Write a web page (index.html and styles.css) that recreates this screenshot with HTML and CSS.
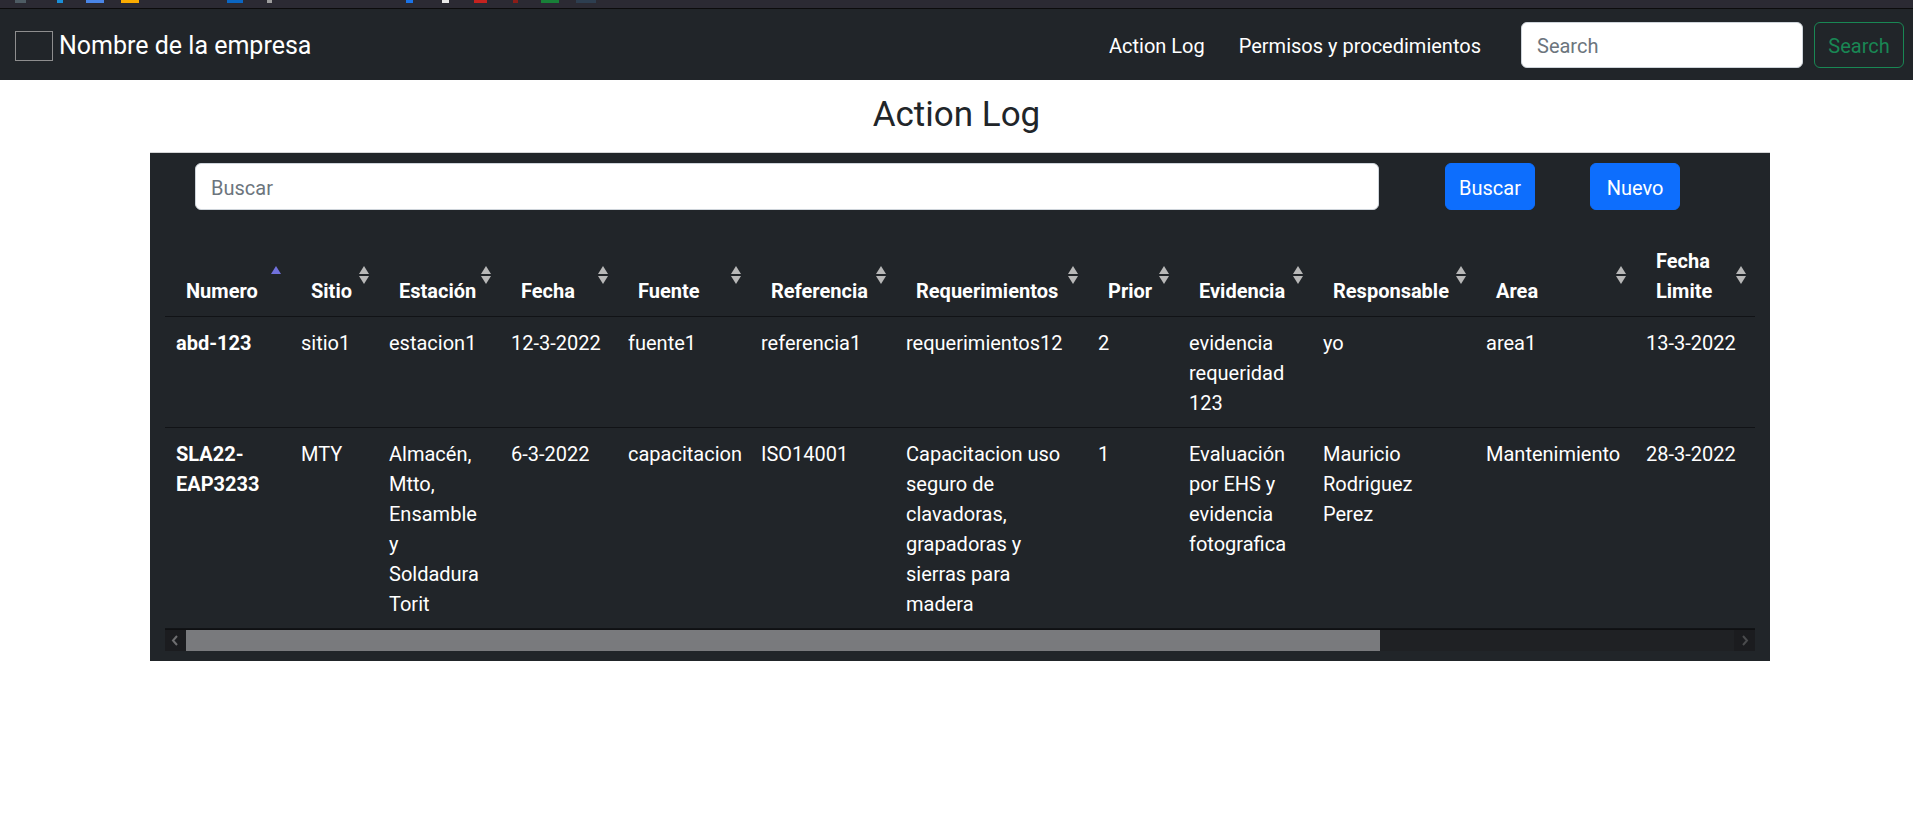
FILE: index.html
```html
<!DOCTYPE html>
<html lang="es">
<head>
<meta charset="utf-8">
<title>Action Log</title>
<link rel="stylesheet" href="styles.css">
</head>
<body>
<div class="chrome">
  <span class="bit b1"></span><span class="bit b2"></span><span class="bit b3"></span><span class="bit b4"></span>
  <span class="bit b5"></span><span class="bit b6"></span><span class="bit b7"></span><span class="bit b8"></span>
  <span class="bit b9"></span><span class="bit b10"></span><span class="bit b11"></span><span class="bit b12"></span>
</div>
<nav class="navbar">
  <a class="brand" href="#"><span class="logo"></span><span class="brand-text">Nombre de la empresa</span></a>
  <ul class="nav">
    <li><a class="nav-link" href="#">Action Log</a></li>
    <li><a class="nav-link" href="#">Permisos y procedimientos</a></li>
  </ul>
  <form class="nav-search">
    <input class="form-control nav-input" type="search" placeholder="Search">
    <button class="btn btn-outline-success" type="button">Search</button>
  </form>
</nav>

<main>
  <h3 class="page-title">Action Log</h3>
  <section class="panel">
    <div class="toolbar">
      <input class="form-control buscar" type="text" placeholder="Buscar">
      <button class="btn btn-primary btn-buscar" type="button">Buscar</button>
      <button class="btn btn-primary btn-nuevo" type="button">Nuevo</button>
    </div>
    <div class="table-wrap">
      <table class="log">
        <colgroup>
          <col class="w1"><col class="w2"><col class="w3"><col class="w4"><col class="w5"><col class="w6">
          <col class="w7"><col class="w8"><col class="w9"><col class="w10"><col class="w11"><col class="w12">
        </colgroup>
        <thead>
          <tr>
            <th>Numero<svg class="sort" viewBox="0 0 10 18"><polygon class="asc" points="0,8 5,0 10,8"/></svg></th>
            <th>Sitio<svg class="sort" viewBox="0 0 10 18"><polygon points="0,8 5,0 10,8"/><polygon points="0,10 10,10 5,18"/></svg></th>
            <th>Estación<svg class="sort" viewBox="0 0 10 18"><polygon points="0,8 5,0 10,8"/><polygon points="0,10 10,10 5,18"/></svg></th>
            <th>Fecha<svg class="sort" viewBox="0 0 10 18"><polygon points="0,8 5,0 10,8"/><polygon points="0,10 10,10 5,18"/></svg></th>
            <th>Fuente<svg class="sort" viewBox="0 0 10 18"><polygon points="0,8 5,0 10,8"/><polygon points="0,10 10,10 5,18"/></svg></th>
            <th>Referencia<svg class="sort" viewBox="0 0 10 18"><polygon points="0,8 5,0 10,8"/><polygon points="0,10 10,10 5,18"/></svg></th>
            <th>Requerimientos<svg class="sort" viewBox="0 0 10 18"><polygon points="0,8 5,0 10,8"/><polygon points="0,10 10,10 5,18"/></svg></th>
            <th>Prior<svg class="sort" viewBox="0 0 10 18"><polygon points="0,8 5,0 10,8"/><polygon points="0,10 10,10 5,18"/></svg></th>
            <th>Evidencia<svg class="sort" viewBox="0 0 10 18"><polygon points="0,8 5,0 10,8"/><polygon points="0,10 10,10 5,18"/></svg></th>
            <th>Responsable<svg class="sort" viewBox="0 0 10 18"><polygon points="0,8 5,0 10,8"/><polygon points="0,10 10,10 5,18"/></svg></th>
            <th>Area<svg class="sort" viewBox="0 0 10 18"><polygon points="0,8 5,0 10,8"/><polygon points="0,10 10,10 5,18"/></svg></th>
            <th>Fecha Limite<svg class="sort" viewBox="0 0 10 18"><polygon points="0,8 5,0 10,8"/><polygon points="0,10 10,10 5,18"/></svg></th>
          </tr>
        </thead>
        <tbody>
          <tr>
            <th scope="row">abd-123</th>
            <td>sitio1</td>
            <td>estacion1</td>
            <td class="text-nowrap">12-3-2022</td>
            <td>fuente1</td>
            <td>referencia1</td>
            <td>requerimientos12</td>
            <td>2</td>
            <td>evidencia requeridad 123</td>
            <td>yo</td>
            <td>area1</td>
            <td class="text-nowrap">13-3-2022</td>
          </tr>
          <tr>
            <th scope="row">SLA22-EAP3233</th>
            <td>MTY</td>
            <td>Almacén, Mtto, Ensamble y Soldadura Torit</td>
            <td class="text-nowrap">6-3-2022</td>
            <td>capacitacion</td>
            <td>ISO14001</td>
            <td>Capacitacion uso seguro de clavadoras, grapadoras y sierras para madera</td>
            <td>1</td>
            <td>Evaluación por EHS y evidencia fotografica</td>
            <td>Mauricio Rodriguez Perez</td>
            <td>Mantenimiento</td>
            <td class="text-nowrap">28-3-2022</td>
          </tr>
        </tbody>
      </table>
    </div>
    <div class="hscroll">
      <span class="sb-btn"><svg viewBox="0 0 21 21"><polyline points="12,6 8,10.5 12,15"/></svg></span>
      <span class="sb-thumb"></span>
      <span class="sb-track"></span>
      <span class="sb-btn sb-right"><svg viewBox="0 0 21 21"><polyline points="9,6 13,10.5 9,15"/></svg></span>
    </div>
  </section>
</main>
</body>
</html>
```
FILE: styles.css
```css
* { box-sizing: border-box; }

html, body {
  margin: 0;
  padding: 0;
}

body {
  font-family: Roboto, "Liberation Sans", sans-serif;
  font-size: 20px;
  line-height: 1.5;
  color: #212529;
  background: #fff;
}

/* ---- browser strip remnant ---- */
.chrome {
  height: 9px;
  background: #2b2a33;
  border-bottom: 1px solid #0c0c0d;
  display: flex;
  align-items: flex-start;
}
.bit { height: 3px; display: block; }
.b1 { margin-left: 15px; width: 11px; background: #4e5c64; }
.b2 { margin-left: 31px; width: 6px; background: #1a8fd8; }
.b3 { margin-left: 23px; width: 18px; background: #4a86e8; }
.b4 { margin-left: 17px; width: 18px; background: #f9ab00; }
.b5 { margin-left: 88px; width: 16px; background: #0a66c2; }
.b6 { margin-left: 24px; width: 5px; background: #9e9e9e; }
.b7 { margin-left: 134px; width: 7px; background: #1a73e8; }
.b8 { margin-left: 29px; width: 7px; background: #e8e8e8; }
.b9 { margin-left: 25px; width: 13px; background: #c5221f; }
.b10 { margin-left: 26px; width: 5px; background: #8c1d18; }
.b11 { margin-left: 23px; width: 18px; background: #188038; }
.b12 { margin-left: 17px; width: 20px; background: #2d3e50; }

/* ---- navbar ---- */
.navbar {
  height: 71px;
  background: #212529;
  display: flex;
  align-items: center;
  padding: 0 9px 0 15px;
}
.brand {
  display: flex;
  align-items: center;
  color: #fff;
  text-decoration: none;
  font-size: 25px;
  line-height: 1.5;
}
.logo {
  width: 38px;
  height: 30px;
  border: 1px solid #8e8e8e;
  margin-top: 3px;
  flex: none;
}
.brand-text {
  margin-left: 6px;
  padding-top: 3px;
}

.nav {
  list-style: none;
  margin: 0 0 0 auto;
  padding: 0;
  display: flex;
}
.nav-link {
  display: block;
  padding: 3px 17px 0;
  color: #fff;
  text-decoration: none;
  font-size: 20px;
}

.nav-search {
  display: flex;
  margin: 0 0 0 23px;
}

.form-control {
  font-family: inherit;
  font-size: 20px;
  line-height: 1.5;
  height: 47px;
  padding: 7px 15px 5px;
  color: #212529;
  background: #fff;
  border: 1px solid #ced4da;
  border-radius: 6px;
  outline: none;
}
.form-control::placeholder { color: #6c757d; opacity: 1; }

.nav-input { width: 282px; height: 46px; }

.btn {
  font-family: inherit;
  font-size: 20px;
  line-height: 1.5;
  height: 47px;
  padding: 7px 0 5px;
  border-radius: 6px;
  cursor: pointer;
}
.btn-outline-success {
  margin-left: 11px;
  width: 90px;
  height: 46px;
  color: #198754;
  background: transparent;
  border: 1px solid #198754;
}
.btn-primary {
  width: 90px;
  color: #fff;
  background: #0d6efd;
  border: 1px solid #0d6efd;
}

/* ---- main ---- */
.page-title {
  margin: 14px 0 16px;
  font-size: 35px;
  line-height: 42px;
  font-weight: 400;
  text-align: center;
  color: #212529;
}

.panel {
  width: 1620px;
  margin-left: 150px;
  background: #212529;
  border-top: 1px solid #d4d5d6;
  padding: 10px 15px 10px;
}

.toolbar {
  display: flex;
  align-items: flex-start;
  padding-left: 30px;
}
.buscar { width: 1184px; }
.btn-buscar { margin-left: 66px; }
.btn-nuevo { margin-left: 55px; }

.table-wrap {
  margin-top: 26px;
  width: 1590px;
  overflow: hidden;
}

.log {
  table-layout: fixed;
  border-collapse: collapse;
  width: 1590px;
  color: #fff;
}
.w1 { width: 125px; }
.w2 { width: 88px; }
.w3 { width: 122px; }
.w4 { width: 117px; }
.w5 { width: 133px; }
.w6 { width: 145px; }
.w7 { width: 192px; }
.w8 { width: 91px; }
.w9 { width: 134px; }
.w10 { width: 163px; }
.w11 { width: 160px; }
.w12 { width: 120px; }

.log thead th {
  position: relative;
  vertical-align: bottom;
  text-align: left;
  font-weight: 700;
  padding: 10px 30px 10px 21px;
  border-bottom: 1px solid #111316;
}
.log tbody th,
.log tbody td {
  vertical-align: top;
  text-align: left;
  padding: 11px 20px 9px 11px;
  border-bottom: 1px solid #111316;
}
.log tbody th { font-weight: 700; }
.log tbody td { font-weight: 400; }
.log .text-nowrap { white-space: nowrap; }

.sort {
  position: absolute;
  right: 9px;
  top: 50%;
  margin-top: -10px;
  width: 10px;
  height: 18px;
  fill: #b8b8b8;
}
.sort .asc { fill: #7171dc; }

/* ---- horizontal scrollbar ---- */
.hscroll {
  display: flex;
  width: 1590px;
  height: 22px;
  border-top: 1px solid #0f1012;
}
.sb-btn {
  width: 21px;
  flex: none;
  background: #1b1c1f;
  display: flex;
}
.sb-btn svg {
  width: 21px;
  height: 21px;
  fill: none;
  stroke: #6e6e70;
  stroke-width: 2;
}
.sb-right svg { stroke: #4a4b4d; }
.sb-thumb {
  width: 1194px;
  flex: none;
  background: #797a7d;
}
.sb-track {
  flex: 1;
  background: #1f2124;
}
```
